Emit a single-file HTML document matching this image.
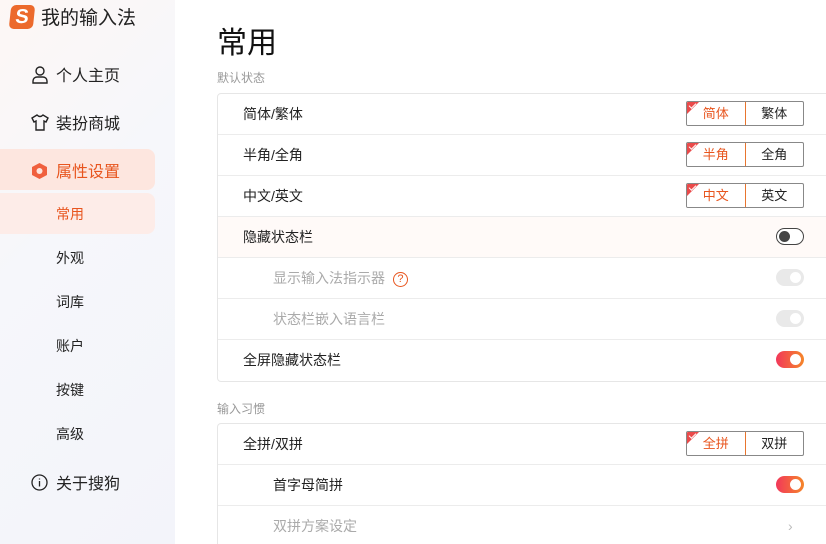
<!DOCTYPE html>
<html style="width:826px;height:544px;overflow:hidden"><head><meta charset="utf-8"><style>
*{margin:0;padding:0;box-sizing:border-box}
body{width:826px;height:544px;overflow:hidden;background:#fff;font-family:"Liberation Sans","Noto Sans CJK SC",sans-serif;position:relative;color:#222}
.side{position:absolute;left:0;top:0;width:175px;height:544px;background:linear-gradient(135deg,#fdf7f5 0%,#f6f7fb 40%,#f3f4fa 100%)}
.logo{position:absolute;left:10px;top:5px;width:24px;height:24px;background:#ec6a2c;border-radius:5px;transform:skewX(-6deg);color:#fff;font-weight:bold;font-size:20px;line-height:24px;text-align:center}
.brand{position:absolute;left:41px;top:3px;font-size:19px;color:#222}
.nav{position:absolute;left:56px;font-size:16px;color:#222}
.sub{position:absolute;left:56px;font-size:14px;color:#222}
.act{position:absolute;left:0;width:155px;height:41px;background:#fde6df;border-radius:0 8px 8px 0}
.act2{position:absolute;left:0;width:155px;height:41px;background:#fdece8;border-radius:0 8px 8px 0}
.title{position:absolute;left:217px;top:18px;font-size:30px;color:#111}
.sect{position:absolute;left:217px;font-size:12px;color:#999}
.card{position:absolute;left:217px;width:640px;border:1px solid #e6e6e6;border-radius:4px;background:#fff;overflow:hidden}
.row{height:41px;border-bottom:1px solid #ececec;position:relative;font-size:14px;line-height:40px;padding-left:25px}
.row:last-child{border-bottom:none}
.row.in{padding-left:55px}
.row.dis{color:#aaa}
.seg{position:absolute;left:468px;top:7px;width:118px;height:25px;border:1px solid #888;border-radius:2px;display:flex;font-size:13px;line-height:23px;overflow:hidden}
.seg div{flex:1;text-align:center}
.seg .on{color:#e8551e;border:1px solid #e8752e;margin:-1px 0 -1px -1px;background:#fff;position:relative}
.seg .on:before{content:"";position:absolute;left:0;top:0;border-top:12px solid #ea4a4a;border-right:12px solid transparent}
.seg .on:after{content:"";position:absolute;left:2px;top:1px;width:6px;height:3px;border-left:1.5px solid #fff;border-bottom:1.5px solid #fff;transform:rotate(-45deg)}
.tg{position:absolute;left:558px;top:11px;width:28px;height:17px;border-radius:9px}
.tg i{position:absolute;top:3px;width:11px;height:11px;border-radius:50%}
.off{border:1.5px solid #444;background:#fff}.off i{left:2px;top:2px;background:#444}
.dtg{background:#e9e9e9}.dtg i{right:3px;background:#fff}
.ontg{background:linear-gradient(90deg,#f2385a,#f5862a)}.ontg i{right:3px;background:#fff}
</style></head><body>
<div class="side">
<div class="logo">S</div><div class="brand">我的输入法</div>
<svg style="position:absolute;left:32px;top:66px" width="16" height="18" viewBox="0 0 16 18" fill="none" stroke="#222" stroke-width="1.4"><circle cx="8" cy="5" r="4"/><path d="M1 17v-2a4 4 0 0 1 4-4h6a4 4 0 0 1 4 4v2z"/></svg>
<div class="nav" style="top:62px">个人主页</div>
<svg style="position:absolute;left:31px;top:114px" width="18" height="17" viewBox="0 0 18 17" fill="none" stroke="#222" stroke-width="1.4"><path d="M6 1 1 4l2 4 2-1v9h8V7l2 1 2-4-5-3q-3 3-6 0z"/></svg>
<div class="nav" style="top:110px">装扮商城</div>
<div class="act" style="top:149px"></div>
<svg style="position:absolute;left:31px;top:162px" width="17" height="18" viewBox="0 0 17 18"><path d="M8.5 1 16 5v8l-7.5 4L1 13V5z" fill="#f0603e"/><circle cx="8.5" cy="9" r="3" fill="#fde6df"/></svg>
<div class="nav" style="top:158px;color:#e8551e">属性设置</div>
<div class="act2" style="top:193px"></div>
<div class="sub" style="top:204px;color:#e8551e">常用</div>
<div class="sub" style="top:248px">外观</div>
<div class="sub" style="top:292px">词库</div>
<div class="sub" style="top:336px">账户</div>
<div class="sub" style="top:380px">按键</div>
<div class="sub" style="top:424px">高级</div>
<svg style="position:absolute;left:31px;top:474px" width="17" height="17" viewBox="0 0 17 17" fill="none" stroke="#222" stroke-width="1.3"><circle cx="8.5" cy="8.5" r="7.5"/><path d="M8.5 7v5.5M8.5 4.5v1"/></svg>
<div class="nav" style="top:470px">关于搜狗</div>
</div>
<div class="title">常用</div>
<div class="sect" style="top:69px">默认状态</div>
<div class="card" style="top:93px">
<div class="row">简体/繁体<div class="seg"><div class="on">简体</div><div>繁体</div></div></div>
<div class="row">半角/全角<div class="seg"><div class="on">半角</div><div>全角</div></div></div>
<div class="row">中文/英文<div class="seg"><div class="on">中文</div><div>英文</div></div></div>
<div class="row" style="background:#fffaf8">隐藏状态栏<div class="tg off"><i></i></div></div>
<div class="row in dis">显示输入法指示器 <span style="display:inline-block;width:15px;height:15px;border:1.3px solid #e8551e;border-radius:50%;color:#e8551e;font-size:11px;line-height:13px;text-align:center;vertical-align:1px;margin-left:4px">?</span><div class="tg dtg"><i></i></div></div>
<div class="row in dis">状态栏嵌入语言栏<div class="tg dtg"><i></i></div></div>
<div class="row">全屏隐藏状态栏<div class="tg ontg"><i></i></div></div>
</div>
<div class="sect" style="top:400px">输入习惯</div>
<div class="card" style="top:423px;height:121px;border-bottom:none;border-radius:4px 4px 0 0">
<div class="row">全拼/双拼<div class="seg"><div class="on">全拼</div><div>双拼</div></div></div>
<div class="row in">首字母简拼<div class="tg ontg"><i></i></div></div>
<div class="row in dis">双拼方案设定<span style="position:absolute;left:570px;top:0;color:#bbb">›</span></div>
</div>
</body></html>
